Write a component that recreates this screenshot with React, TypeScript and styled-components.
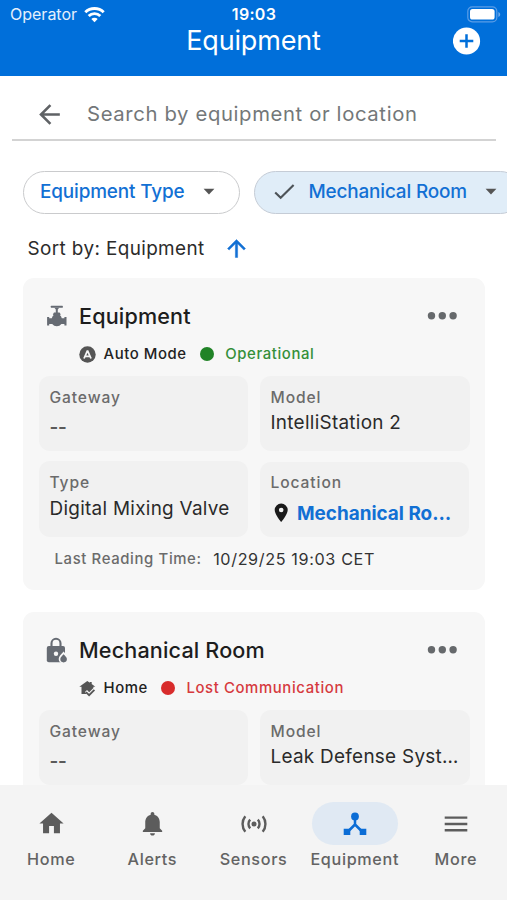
import React from 'react';
import styled, { createGlobalStyle, css } from 'styled-components';

const GlobalStyle = createGlobalStyle`
  *, *::before, *::after { box-sizing: border-box; }
  body { margin: 0; background: #fff; font-family: Inter, "Noto Sans", sans-serif; color: #1f1f1f; }
  button { font: inherit; color: inherit; background: none; border: 0; padding: 0; margin: 0; letter-spacing: inherit; }
  svg { display: block; flex: none; }
`;

const Screen = styled.div`
  width: 507px;
  height: 900px;
  display: flex;
  flex-direction: column;
  overflow: hidden;
  background: #fff;
`;

const Header = styled.header`
  flex: none;
  height: 76px;
  background: #006fda;
  color: #fff;
`;

const StatusBar = styled.div`
  height: 27px;
  padding: 2px 9px 0 10px;
  display: grid;
  grid-template-columns: 1fr auto 1fr;
  align-items: center;
  font-size: 16px;
  line-height: 25px;
`;

const Carrier = styled.div`
  display: flex;
  align-items: center;
  gap: 7px;
  color: #e4f0fc;
`;

const Clock = styled.div`
  font-weight: 600;
  letter-spacing: 0.3px;
`;

const Battery = styled.div`
  display: flex;
  justify-content: flex-end;
  margin-right: -3px;
`;

const TitleBar = styled.div`
  display: grid;
  grid-template-columns: 1fr auto 1fr;
  align-items: center;
  height: 26px;
  padding: 0 26px;
`;

const PageTitle = styled.h1`
  grid-column: 2;
  margin: 0;
  font-size: 27px;
  line-height: 26px;
  font-weight: 400;
  letter-spacing: -0.15px;
`;

const AddButton = styled.button`
  justify-self: end;
`;

const Content = styled.main`
  flex: 1;
  min-height: 0;
  overflow: hidden;
  display: flex;
  flex-direction: column;
`;

const SearchBar = styled.div`
  flex: none;
  margin: 0 11px 0 12px;
  height: 65px;
  border-bottom: 2px solid #d3d3d3;
  display: flex;
  align-items: center;
  gap: 22px;
  padding: 13px 0 0 22px;
  color: #5f6265;
`;

const SearchText = styled.span`
  font-size: 20.3px;
  line-height: 28px;
  letter-spacing: 0.63px;
  color: #737779;
  white-space: nowrap;
`;

const Filters = styled.div`
  flex: none;
  display: flex;
  gap: 13.5px;
  padding: 30px 0 0 22.5px;
`;

const Chip = styled.button<{ $selected?: boolean }>`
  flex: none;
  height: 43px;
  border: 1.5px solid #cacbcd;
  border-radius: 22px;
  display: flex;
  align-items: center;
  padding: 0 24px 2px 16.5px;
  font-size: 18.9px;
  font-weight: 500;
  letter-spacing: -0.14px;
  color: #1270d4;
  white-space: nowrap;
  ${p => p.$selected && css`
    background: #e0edf8;
    border-color: #c5ccd6;
    padding-left: 19.5px;
  `}
`;

const ChipLabel = styled.span<{ $afterCheck?: boolean }>`
  margin-left: ${p => (p.$afterCheck ? 13 : 0)}px;
  margin-right: ${p => (p.$afterCheck ? 18 : 19)}px;
`;

const SortRow = styled.div`
  flex: none;
  display: flex;
  align-items: center;
  gap: 18.5px;
  height: 28px;
  margin: 20px 0 16px 27.5px;
  font-size: 18.9px;
  letter-spacing: 0.39px;
  color: #2b2b2b;
`;

const CardList = styled.div`
  display: flex;
  flex-direction: column;
  gap: 22px;
  padding: 0 22px 0 23px;
`;

const Card = styled.article`
  flex: none;
  height: 312px;
  border-radius: 11px;
  background: #f7f7f7;
  padding: 22px 16px 0;
`;

const CardHead = styled.div`
  height: 32px;
  display: flex;
  align-items: center;
  padding: 0 12px 0 6.5px;
`;

const IconSlot = styled.span`
  width: 33.5px;
  flex: none;
`;

const CardTitle = styled.h2`
  flex: 1;
  margin: 0;
  font-size: 21.6px;
  line-height: 32px;
  font-weight: 450;
  letter-spacing: 0.15px;
  color: #1d1d1d;
`;

const StatusRow = styled.div`
  height: 26px;
  margin: 9px 0 8.5px;
  padding-left: 40px;
  display: flex;
  align-items: center;
  font-size: 14.9px;
  font-weight: 500;
`;

const Mode = styled.span`
  margin: 0 13px 0 7.5px;
  letter-spacing: 0.58px;
  color: #222;
`;

const Dot = styled.span<{ $color: string }>`
  width: 14px;
  height: 14px;
  border-radius: 50%;
  margin-right: 11.5px;
  background: ${p => p.$color};
`;

const StatusText = styled.span<{ $color: string }>`
  color: ${p => p.$color};
  letter-spacing: 0.62px;
`;

const Cells = styled.div`
  display: grid;
  grid-template-columns: 209px 210px;
  grid-template-rows: 75px;
  grid-auto-rows: 76.5px;
  column-gap: 12px;
  row-gap: 10px;
`;

const Cell = styled.div<{ $inset?: boolean }>`
  border-radius: 11px;
  background: #f1f1f1;
  padding: 12px 10px 0 10.5px;
  min-width: 0;
  &:nth-child(n + 3) { padding-top: 12.5px; }
  ${p => p.$inset && css`
    margin: 1px 1px 0 0;
    &:nth-child(n + 3) { padding-top: 11.5px; }
  `}
`;

const CellLabel = styled.div`
  font-size: 15.6px;
  line-height: 20px;
  font-weight: 500;
  letter-spacing: 0.9px;
  color: #6b6b6b;
`;

const CellValue = styled.div<{ $tall?: boolean }>`
  display: flex;
  align-items: center;
  height: ${p => (p.$tall ? 40 : 30)}px;
  font-size: 18.9px;
  letter-spacing: 0.29px;
  white-space: nowrap;
  color: #2a2a2a;
`;

const EmptyValue = styled.span`
  font-weight: 600;
  color: #5a5a5a;
  letter-spacing: -0.2px;
`;

const LocationLink = styled.span`
  margin-left: 7.5px;
  font-weight: 700;
  letter-spacing: 0;
  color: #1270d4;
`;

const Reading = styled.div`
  display: flex;
  align-items: center;
  gap: 11.5px;
  height: 24px;
  margin: 9.5px 0 0 15.5px;
`;

const ReadingLabel = styled.span`
  font-size: 14.9px;
  font-weight: 500;
  letter-spacing: 0.63px;
  color: #6b6b6b;
`;

const ReadingTime = styled.span`
  font-size: 16.2px;
  letter-spacing: 0.62px;
  color: #333;
`;

const Nav = styled.nav`
  flex: none;
  height: 115px;
  background: #f4f4f4;
  display: grid;
  grid-template-columns: repeat(5, 101.2px);
  padding: 17px 0 0 0.6px;
`;

const NavItem = styled.button`
  display: flex;
  flex-direction: column;
  align-items: center;
  color: #5c5c5c;
`;

const NavPill = styled.span<{ $active?: boolean }>`
  width: 86px;
  height: 43px;
  border-radius: 22px;
  display: flex;
  align-items: center;
  justify-content: center;
  background: ${p => (p.$active ? '#e0e9f3' : 'transparent')};
  color: ${p => (p.$active ? '#0b6dd6' : 'inherit')};
`;

const NavLabel = styled.span`
  margin-top: 2px;
  font-size: 16.2px;
  line-height: 24px;
  font-weight: 500;
  letter-spacing: 0.66px;
  color: #636363;
`;

const WifiIcon = () => (
  <svg width="21" height="16" viewBox="0 0 21 16" fill="none" stroke="#fff" strokeWidth="2.9">
    <path d="M1.3 5.3a13.2 13.2 0 0 1 18.4 0" />
    <path d="M4.7 9a8.3 8.3 0 0 1 11.6 0" />
    <path d="M10.5 15.3 7.3 12.1a4.6 4.6 0 0 1 6.4 0z" fill="#fff" stroke="none" />
  </svg>
);

const BatteryIcon = () => (
  <svg width="34" height="17" viewBox="0 0 34 17">
    <rect x="0.8" y="0.8" width="29" height="15" rx="4.4" fill="none" stroke="#5a9de6" strokeWidth="1.2" />
    <rect x="3" y="3" width="24.6" height="10.6" rx="2.6" fill="#fff" />
    <path d="M31.4 6v5c1.1-.4 1.8-1.3 1.8-2.5S32.5 6.4 31.4 6z" fill="#6faaea" />
  </svg>
);

const AddIcon = () => (
  <svg width="28" height="28" viewBox="0 0 28 28">
    <circle cx="13.5" cy="14" r="13.6" fill="#fff" />
    <path d="M13.5 7.2v13.6M6.7 14h13.6" stroke="#006fda" strokeWidth="2.5" />
  </svg>
);

const BackIcon = () => (
  <svg width="31" height="31" viewBox="0 0 24 24" fill="currentColor">
    <path d="M20 11H7.83l5.59-5.59L12 4l-8 8 8 8 1.41-1.41L7.83 13H20z" />
  </svg>
);

const UpIcon = () => (
  <svg width="27" height="27" viewBox="0 0 24 24" fill="#1270d4" stroke="#1270d4" strokeWidth="0.4">
    <path d="m4 12 1.41 1.41L11 7.83V20h2V7.83l5.58 5.59L20 12l-8-8z" />
  </svg>
);

const CaretIcon = () => (
  <svg width="12" height="7" viewBox="0 0 12 7" fill="#555">
    <path d="M.6.8h10.8L6 6.4z" />
  </svg>
);

const CheckIcon = () => (
  <svg width="21" height="17" viewBox="0 0 21 17" fill="none" stroke="#4d5358" strokeWidth="2.1">
    <path d="m1.2 9.5 5.500 5.300L19.600 1.900" />
  </svg>
);

const ValveIcon = () => (
  <svg width="22" height="22" viewBox="0 0 22 22" fill="#666b73">
    <rect x="4.800" y="0.800" width="12" height="1.900" rx="0.500" />
    <path d="M8.400 2.700h4.800l-1.400 1.700v3h1.800l1.200 2.100-.9.6a5.600 5.600 0 0 1 1.900 3.200h2.600v-1.400h2.100v8.600h-2.100v-1.500h-3a5.700 5.700 0 0 1-9.200 0h-3v1.500H1.100v-8.600h2.100v1.400h2.600a5.600 5.600 0 0 1 1.900-3.200l-.9-.6L8 7.400h1.800v-3z" />
  </svg>
);

const LockIcon = () => (
  <svg width="22" height="26" viewBox="0 0 22 26">
    <path d="M5.500 10V6.300a4.500 4.500 0 0 1 9 0V10" fill="none" stroke="#666b73" strokeWidth="2.100" />
    <rect x="0.800" y="9" width="18.200" height="16.300" rx="2" fill="#666b73" />
    <circle cx="10" cy="16.800" r="2.200" fill="#f7f7f7" />
    <path d="M17.600 14.500c2.400 3 4.900 4.500 4.900 7.400a4.900 4.900 0 0 1-9.800 0c0-2.900 2.500-4.400 4.900-7.400z" fill="#f7f7f7" />
    <path d="M17.600 17.200c1.600 1.900 3.300 3 3.300 4.900a3.300 3.300 0 0 1-6.600 0c0-1.900 1.700-3 3.300-4.900z" fill="#666b73" />
  </svg>
);

const AutoIcon = () => (
  <svg width="17" height="17" viewBox="0 0 17 17">
    <circle cx="8.500" cy="8.500" r="8.200" fill="#555" />
    <path d="M5 12.500 8.500 4.600l3.500 7.900M6.300 10.300h4.400" fill="none" stroke="#f7f7f7" strokeWidth="1.800" strokeLinejoin="bevel" />
  </svg>
);

const HomeModeIcon = () => (
  <svg width="17" height="17" viewBox="0 0 17 17">
    <path d="M8.300 1 .3 6.700h2.200v7.200h5.200L6 12.100l2-2 2.200 2.200 4.200-4.200V6.700h1.900L12.700 4V2h-1.900v.8z" fill="#555" />
    <path d="m7 12.200 3.100 3 5.300-5.300" fill="none" stroke="#555" strokeWidth="1.800" />
  </svg>
);

const DotsIcon = () => (
  <svg width="30" height="10" viewBox="0 0 30 10" fill="#66696c">
    <circle cx="4.500" cy="4.700" r="3.700" />
    <circle cx="15.300" cy="4.700" r="3.700" />
    <circle cx="26.100" cy="4.700" r="3.700" />
  </svg>
);

const PinIcon = () => (
  <svg width="19" height="20" viewBox="0 0 19 20" fill="#1a1a1a" fillRule="evenodd">
    <path d="M10.200.5a6.500 6.500 0 0 0-6.500 6.500c0 4.600 6.500 12 6.500 12s6.500-7.400 6.500-12A6.500 6.500 0 0 0 10.200.5zm0 4.200a2.300 2.300 0 1 1 0 4.600 2.300 2.300 0 0 1 0-4.600z" />
  </svg>
);

const NavHomeIcon = () => (
  <svg width="29" height="29" viewBox="0 0 24 24" fill="currentColor">
    <path d="M10 20v-6h4v6h5v-8h3L12 3 2 12h3v8z" />
  </svg>
);

const BellIcon = () => (
  <svg width="29" height="29" viewBox="0 0 24 24" fill="currentColor">
    <path d="M12 22c1.1 0 2-.9 2-2h-4c0 1.1.89 2 2 2zm6-6v-5c0-3.07-1.64-5.64-4.5-6.32V4c0-.83-.67-1.5-1.5-1.5s-1.5.67-1.5 1.5v.68C7.63 5.36 6 7.92 6 11v5l-2 2v1h16v-1l-2-2z" />
  </svg>
);

const SensorsIcon = () => (
  <svg width="28" height="20" viewBox="0 0 28 20" fill="none" stroke="currentColor" strokeWidth="2.400">
    <circle cx="14" cy="10" r="2.500" fill="currentColor" stroke="none" />
    <path d="M10.200 5.700a6.200 6.200 0 0 0 0 8.600M17.800 5.700a6.200 6.200 0 0 1 0 8.600M5.300 2.200a12.500 12.500 0 0 0 0 15.600M22.700 2.200a12.500 12.500 0 0 1 0 15.600" />
  </svg>
);

const HubIcon = () => (
  <svg width="24" height="24" viewBox="0 0 24 24" fill="currentColor">
    <circle cx="12" cy="4.400" r="3.900" />
    <path d="M12 7v6.500M12 12.500l-7.500 7.500M12 12.500l7.500 7.500" fill="none" stroke="currentColor" strokeWidth="2.500" />
    <path d="M.7 16.700h6.600v6.300H.7zM16.700 16.700h6.600v6.300h-6.600z" />
  </svg>
);

const MenuIcon = () => (
  <svg width="24" height="18" viewBox="0 0 24 18" stroke="currentColor" strokeWidth="2.400">
    <path d="M.7 2.600h22.600M.7 9h22.600M.7 15.300h22.600" />
  </svg>
);

const GREEN = ['#218327', '#348f3a'];
const RED = ['#d82c2c', '#d63a3e'];

type EquipmentProps = {
  icon: React.ReactNode;
  title: string;
  modeIcon: React.ReactNode;
  mode: string;
  tone: string[];
  status: string;
  model: string;
  type?: string;
  location?: string;
  lastReading?: string;
};

const EquipmentCard = ({ icon, title, modeIcon, mode, tone, status, model, type, location, lastReading }: EquipmentProps) => (
  <Card>
    <CardHead>
      <IconSlot>{icon}</IconSlot>
      <CardTitle>{title}</CardTitle>
      <button aria-label="Options"><DotsIcon /></button>
    </CardHead>
    <StatusRow>
      {modeIcon}
      <Mode>{mode}</Mode>
      <Dot $color={tone[0]} />
      <StatusText $color={tone[1]}>{status}</StatusText>
    </StatusRow>
    <Cells>
      <Cell>
        <CellLabel>Gateway</CellLabel>
        <CellValue $tall><EmptyValue>--</EmptyValue></CellValue>
      </Cell>
      <Cell>
        <CellLabel>Model</CellLabel>
        <CellValue>{model}</CellValue>
      </Cell>
      {type && (
        <Cell>
          <CellLabel>Type</CellLabel>
          <CellValue>{type}</CellValue>
        </Cell>
      )}
      {location && (
        <Cell $inset>
          <CellLabel>Location</CellLabel>
          <CellValue $tall><PinIcon /><LocationLink>{location}</LocationLink></CellValue>
        </Cell>
      )}
    </Cells>
    {lastReading && (
      <Reading>
        <ReadingLabel>Last Reading Time:</ReadingLabel>
        <ReadingTime>{lastReading}</ReadingTime>
      </Reading>
    )}
  </Card>
);

const navItems = [
  { label: 'Home', icon: <NavHomeIcon /> },
  { label: 'Alerts', icon: <BellIcon /> },
  { label: 'Sensors', icon: <SensorsIcon /> },
  { label: 'Equipment', icon: <HubIcon />, active: true },
  { label: 'More', icon: <MenuIcon /> },
];

export default function App() {
  return (
    <>
      <GlobalStyle />
      <Screen>
        <Header>
          <StatusBar>
            <Carrier>Operator<WifiIcon /></Carrier>
            <Clock>19:03</Clock>
            <Battery><BatteryIcon /></Battery>
          </StatusBar>
          <TitleBar>
            <PageTitle>Equipment</PageTitle>
            <AddButton aria-label="Add equipment"><AddIcon /></AddButton>
          </TitleBar>
        </Header>
        <Content>
          <SearchBar>
            <BackIcon />
            <SearchText>Search by equipment or location</SearchText>
          </SearchBar>
          <Filters>
            <Chip><ChipLabel>Equipment Type</ChipLabel><CaretIcon /></Chip>
            <Chip $selected><CheckIcon /><ChipLabel $afterCheck>Mechanical Room</ChipLabel><CaretIcon /></Chip>
          </Filters>
          <SortRow>Sort by: Equipment<UpIcon /></SortRow>
          <CardList>
            <EquipmentCard icon={<ValveIcon />} title="Equipment" modeIcon={<AutoIcon />} mode="Auto Mode"
              tone={GREEN} status="Operational" model="IntelliStation 2" type="Digital Mixing Valve"
              location="Mechanical Ro…" lastReading="10/29/25 19:03 CET" />
            <EquipmentCard icon={<LockIcon />} title="Mechanical Room" modeIcon={<HomeModeIcon />} mode="Home"
              tone={RED} status="Lost Communication" model="Leak Defense Syst…" />
          </CardList>
        </Content>
        <Nav>
          {navItems.map(({ label, icon, active }) => (
            <NavItem key={label}>
              <NavPill $active={active}>{icon}</NavPill>
              <NavLabel>{label}</NavLabel>
            </NavItem>
          ))}
        </Nav>
      </Screen>
    </>
  );
}
